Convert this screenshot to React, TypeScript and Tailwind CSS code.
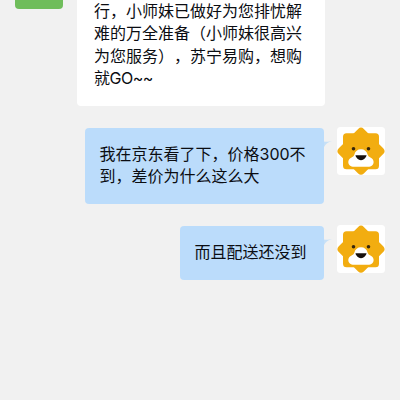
import React from "react";

const textFont =
  "font-['Inter','Noto_Sans_CJK_SC',sans-serif] text-[16px] leading-[22.4px] text-[#0b0d12] [text-spacing-trim:space-all]";

function LionAvatar() {
  return (
    <svg className="h-12 w-12 shrink-0" viewBox="0 0 48 48">
      <rect width="48" height="48" rx="3.5" fill="#fff" />
      <g fill="#f2ad10">
        <rect x="6" y="6.3" width="36" height="36" rx="3.5" />
        <rect x="6.3" y="6.5" width="35.4" height="35.4" rx="4" transform="rotate(45 24 24.2)" />
      </g>
      <path
        d="M24 22.3C20.6 22.3 18.2 24.3 17.4 27.5C17 29.2 15.8 29.9 14.2 30.7C12.4 31.6 11.3 33 11.3 35C11.3 38 13.6 39.8 17 39.8H31C34.4 39.8 36.6 38 36.6 35C36.6 33 35.6 31.6 33.8 30.7C32.2 29.9 31 29.2 30.6 27.5C29.8 24.3 27.4 22.3 24 22.3Z"
        fill="#fff"
      />
      <circle cx="16.5" cy="21.7" r="1.8" fill="#38270b" />
      <circle cx="31.5" cy="21.7" r="1.8" fill="#38270b" />
      <path d="M18.5 28.3H29.5C29.5 30 26.8 33.3 24 33.3S18.5 30 18.5 28.3Z" fill="#17100d" />
    </svg>
  );
}

function SentMessage({ lines, className }: { lines: string[]; className: string }) {
  return (
    <div className="flex items-start justify-end gap-[13.5px] pr-[15px]">
      <div className={`relative mt-px rounded-[4px] bg-[#bbdcfb] pt-[15px] pl-[14.5px] ${textFont} ${className}`}>
        {lines.map((line) => (
          <div key={line} className="whitespace-nowrap">{line}</div>
        ))}
        <svg className="absolute top-[12px] -right-[8px] h-2 w-2" viewBox="0 0 8 8">
          <path d="M0 1.5C3 2 5 1.5 8 1C4 2 1.500 4 0 7z" fill="#c6e0f7" />
        </svg>
      </div>
      <LionAvatar />
    </div>
  );
}

export default function App() {
  return (
    <main className="h-[400px] w-[400px] overflow-hidden bg-[#f1f1f1]">
      <section className="flex h-[106px] items-start gap-[14px] pl-[15px]">
        <div className="h-[9px] w-12 rounded-b-[4px] bg-[#6fbd5b]" />
        <div className={`h-[106px] w-[248px] rounded-b-[4px] bg-white pl-[17px] ${textFont}`}>
          <div className="whitespace-nowrap">行，小师妹已做好为您排忧解</div>
          <div className="whitespace-nowrap">难的万全准备（小师妹很高兴</div>
          <div className="whitespace-nowrap">为您服务），苏宁易购，想购</div>
          <div className="whitespace-nowrap tracking-[-0.5px]">就GO~~</div>
        </div>
      </section>
      <div className="mt-[21px] flex flex-col gap-[21px]">
        <SentMessage lines={["我在京东看了下，价格300不", "到，差价为什么这么大"]} className="h-[76px] w-[238.5px]" />
        <SentMessage lines={["而且配送还没到"]} className="h-[54px] w-[143.5px]" />
      </div>
    </main>
  );
}
